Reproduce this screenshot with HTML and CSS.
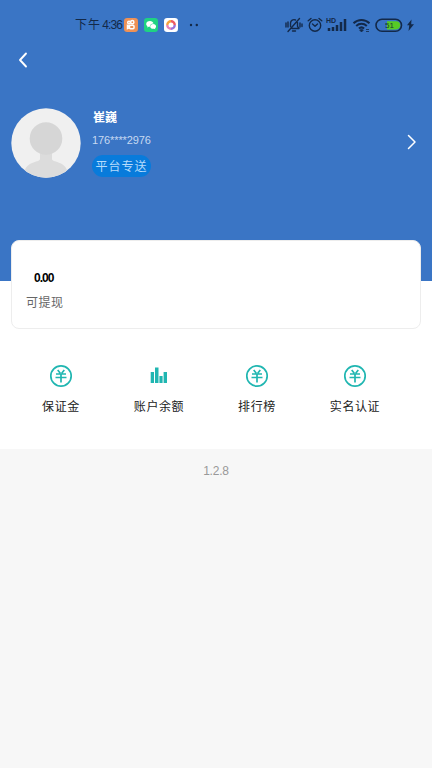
FILE: index.html
```html
<!DOCTYPE html>
<html lang="zh-CN">
<head>
<meta charset="utf-8">
<title>我的</title>
<link rel="stylesheet" href="styles.css">
</head>
<body>
<main class="main">
  <header class="hero">
    <div class="status">
      <div class="status-left">
        <span class="time"><span class="period">下午</span><span class="clock">4:36</span></span>
        <svg class="app" viewBox="0 0 14 14"><rect width="14" height="14" rx="3.2" fill="#ee9156"/><g fill="none" stroke="#fff" stroke-width="1.5"><circle cx="5" cy="4.600" r="1.300"/><circle cx="8.300" cy="4.200" r="1.600"/><rect x="5.500" y="7.200" width="4.500" height="3.600" rx="1"/><path d="M5.500 8.500 3.500 7.500v3l2-1"/></g></svg>
        <svg class="app" viewBox="0 0 14 14"><rect width="14" height="14" rx="3.2" fill="#1fd282"/><path d="M6 3C3.800 3 2.200 4.300 2.200 6c0 1 .5 1.800 1.300 2.300L3.200 9.500l1.500-.8h1.200C5.600 6.900 7.200 5.500 9.500 5.500 9.200 4 7.800 3 6 3z" fill="#fff"/><path d="M9.200 6C7.400 6 6.200 7.100 6.200 8.400s1.300 2.400 3 2.400l.9-.1 1.200.6-.2-1c.6-.5 1-1.100 1-1.900C12.100 7.100 10.800 6 9.200 6z" fill="#fff"/></svg>
        <svg class="app" viewBox="0 0 14 14"><rect width="14" height="14" rx="3.2" fill="#fff"/><g fill="none" stroke-width="2.400"><path d="M3.300 7A3.700 3.700 0 0 1 7 3.300" stroke="#f5a340"/><path d="M7 3.300A3.700 3.700 0 0 1 10.700 7" stroke="#ec5c62"/><path d="M10.700 7A3.700 3.700 0 0 1 7 10.700" stroke="#9b73d8"/><path d="M7 10.700A3.700 3.700 0 0 1 3.300 7" stroke="#e982b8"/></g></svg>
        <svg class="dots" viewBox="0 0 10 4"><circle cx="2" cy="2" r="1.200"/><circle cx="7.800" cy="2" r="1.200"/></svg>
      </div>
      <div class="status-right">
        <svg width="18" height="18" viewBox="0 0 18 18"><g class="ink"><path d="M5.500 10.500V7a3.500 3.500 0 0 1 5-3M12.500 6.500v3.800l1.500 2.200H7M7.500 15h3M3 15.500 14.500 2.500M1 7v4M3 6v5M15 7v4M17 8v2.500"/></g></svg>
        <svg width="16" height="18" viewBox="0 0 16 18"><g class="ink"><circle cx="8" cy="9.500" r="5.700"/><path d="M5.500 8 8 10.300 10.500 8M1.200 4.800 4 2.500M14.800 4.800 12 2.500"/></g></svg>
        <svg class="signal" width="22" height="18" viewBox="0 0 22 18"><text x="0" y="7" class="hd">HD</text><path class="bars" d="M3 15v-3M7 15v-4M11 15V9M15 15V6M19 15V3"/></svg>
        <svg width="19" height="18" viewBox="0 0 19 18"><g class="wifi"><path d="M1.500 7.200c4.500-4.300 11.500-4.300 16 0M4.200 10c3-2.900 7.600-2.900 10.600 0M6.900 12.600c1.500-1.400 3.700-1.400 5.200 0"/></g><path d="m9.500 16-1.800-1.900q1.800-1.400 3.600 0zM14 13.500h3M14 15.500h3" fill="#132949" stroke="#132949" stroke-width=".8"/></svg>
        <svg class="battery" width="28" height="18" viewBox="0 0 28 18"><rect x="1" y="3.300" width="25.500" height="12" rx="6" fill="none" stroke="#132949" stroke-width="1.600"/><path d="M12 5.200h9a4.100 4.100 0 0 1 0 8.200h-9z" fill="#57cb25"/><text x="10" y="12" class="charge">51</text></svg>
        <svg width="7" height="18" viewBox="0 0 7 18"><path d="M4.500 3.500 0 9.300h2.300L1.500 15 7 8.300H4.200z" fill="#132949"/></svg>
      </div>
    </div>
    <nav class="nav"><svg width="10" height="16" viewBox="0 0 10 16"><path class="chevron back" d="M8 1.500 2 8l6 6.500"/></svg></nav>
    <section class="profile">
      <svg class="avatar" viewBox="0 0 70 70"><defs><clipPath id="disc"><circle cx="35" cy="35" r="34.700"/></clipPath></defs><circle cx="35" cy="35" r="34.700" fill="#f0f0f0"/><g clip-path="url(#disc)" fill="#dcdcdc"><path d="M29 43h12v8c0 3.500 12 1.500 15.500 12v8h-43v-8C17 52.500 29 54.500 29 51z"/><circle cx="35" cy="30.500" r="16.300" fill="#d6d6d6"/></g></svg>
      <div class="who">
        <div class="name">崔巍</div>
        <div class="phone">176****2976</div>
        <div class="tag">平台专送</div>
      </div>
      <svg class="go" width="10" height="16" viewBox="0 0 10 16"><path class="chevron" d="m1.500 1.500 6.500 6.500-6.500 6.500"/></svg>
    </section>
  </header>
  <section class="card">
    <div class="amount">0.00</div>
    <div class="label">可提现</div>
  </section>
  <section class="menu">
    <div class="item"><svg class="icon" viewBox="0 0 24 24"><g class="yen"><circle cx="12" cy="12" r="10.200"/><path d="m8.700 6 2.600 3.200M15.300 6l-2.600 3.200M7 10h10M6.500 13.500h11M12 9.500v9"/></g></svg><span>保证金</span></div>
    <div class="item"><svg class="icon" viewBox="0 0 24 24"><path d="M3.700 8H7v11H3.700zM8 3.600h3.500V19H8zM12.400 12h3.200v7h-3.200zM16.600 8H20v11h-3.400z" fill="#20b6b1"/></svg><span>账户余额</span></div>
    <div class="item"><svg class="icon" viewBox="0 0 24 24"><g class="yen"><circle cx="12" cy="12" r="10.200"/><path d="m8.700 6 2.600 3.200M15.300 6l-2.600 3.200M7 10h10M6.500 13.500h11M12 9.500v9"/></g></svg><span>排行榜</span></div>
    <div class="item"><svg class="icon" viewBox="0 0 24 24"><g class="yen"><circle cx="12" cy="12" r="10.200"/><path d="m8.700 6 2.600 3.200M15.300 6l-2.600 3.200M7 10h10M6.500 13.500h11M12 9.500v9"/></g></svg><span>实名认证</span></div>
  </section>
</main>
<footer class="version">1.2.8</footer>
</body>
</html>
```
FILE: styles.css
```css
* { box-sizing: border-box; }
body {
  margin: 0;
  min-height: 768px;
  background: #f7f7f7;
  font-family: "Liberation Sans", "Noto Sans CJK SC", sans-serif;
  color: #222;
}
svg { display: block; flex: none; }
.main { height: 449px; background: #fff; }
.hero { height: 281px; background: #3a75c5; }
.status {
  height: 48px;
  padding: 1px 18px 0 75px;
  display: flex;
  align-items: center;
  justify-content: space-between;
}
.status-left, .status-right { display: flex; align-items: center; }
.status-left { gap: 6px; }
.time {
  width: 49px;
  margin-right: -6px;
  display: flex;
  justify-content: space-between;
  padding-right: 2px;
  font-size: 12px;
  line-height: 16px;
  color: #132949;
  white-space: nowrap;
}
.period { letter-spacing: 1px; }
.clock { letter-spacing: -.9px; }
.app { width: 14px; height: 14px; }
.dots { width: 10px; height: 4px; margin-left: 5px; fill: #132949; }
.status-right { gap: 4px; }
.status-right .signal { margin-left: -1px; }
.ink { fill: none; stroke: #132949; stroke-width: 1.4; stroke-linecap: round; stroke-linejoin: round; }
.hd { font-size: 7px; font-weight: 700; fill: #132949; }
.bars { stroke: #132949; stroke-width: 2.5; }
.wifi { fill: none; stroke: #132949; stroke-width: 2; }
.charge { font-size: 8px; fill: #173b32; }
.nav { height: 60px; padding: 4px 0 0 18px; }
.chevron { fill: none; stroke: #fff; stroke-width: 1.5; stroke-linecap: round; stroke-linejoin: round; }
.back { stroke-width: 1.9; }
.profile { display: flex; padding: 0 15px 0 11px; }
.avatar { width: 70px; height: 70px; }
.who { margin-left: 11px; display: flex; flex-direction: column; align-items: flex-start; flex: 1; }
.name { height: 18px; padding: 1px 0 0 1px; font-size: 12px; line-height: 18px; font-weight: 700; color: #fff; }
.phone { margin-top: 6px; height: 18px; font-size: 11px; line-height: 17px; letter-spacing: -.1px; color: #c7d9f1; }
.tag {
  margin-top: 5px;
  width: 59px;
  height: 22px;
  padding-top: 2px;
  border-radius: 11px;
  background: #087bdb;
  color: #b6dcfb;
  font-size: 12px;
  letter-spacing: 1px;
  line-height: 20px;
  text-align: center;
  white-space: nowrap;
}
.go { margin-top: 26px; }
.card {
  height: 89px;
  position: relative;
  margin: -41px 11px 0;
  padding: 28px 14px 0;
  border: 1px solid #ededed;
  border-radius: 8px;
  background: #fff;
}
.amount { padding-left: 8px; font-size: 12px; line-height: 18px; letter-spacing: -1px; font-weight: 700; color: #000; }
.label { margin-top: 8px; font-size: 12px; line-height: 16px; letter-spacing: .5px; color: #666; }
.menu { display: grid; grid-template-columns: repeat(4, 98px); padding: 35px 0 0 12px; }
.item { display: flex; flex-direction: column; align-items: center; font-size: 12px; line-height: 18px; letter-spacing: .6px; color: #222; }
.icon { width: 24px; height: 24px; margin-bottom: 10px; }
.yen { fill: none; stroke: #20b6b1; stroke-width: 1.7; }
.version { padding-top: 13px; text-align: center; font-size: 12px; line-height: 18px; letter-spacing: -.2px; color: #999; }
```
